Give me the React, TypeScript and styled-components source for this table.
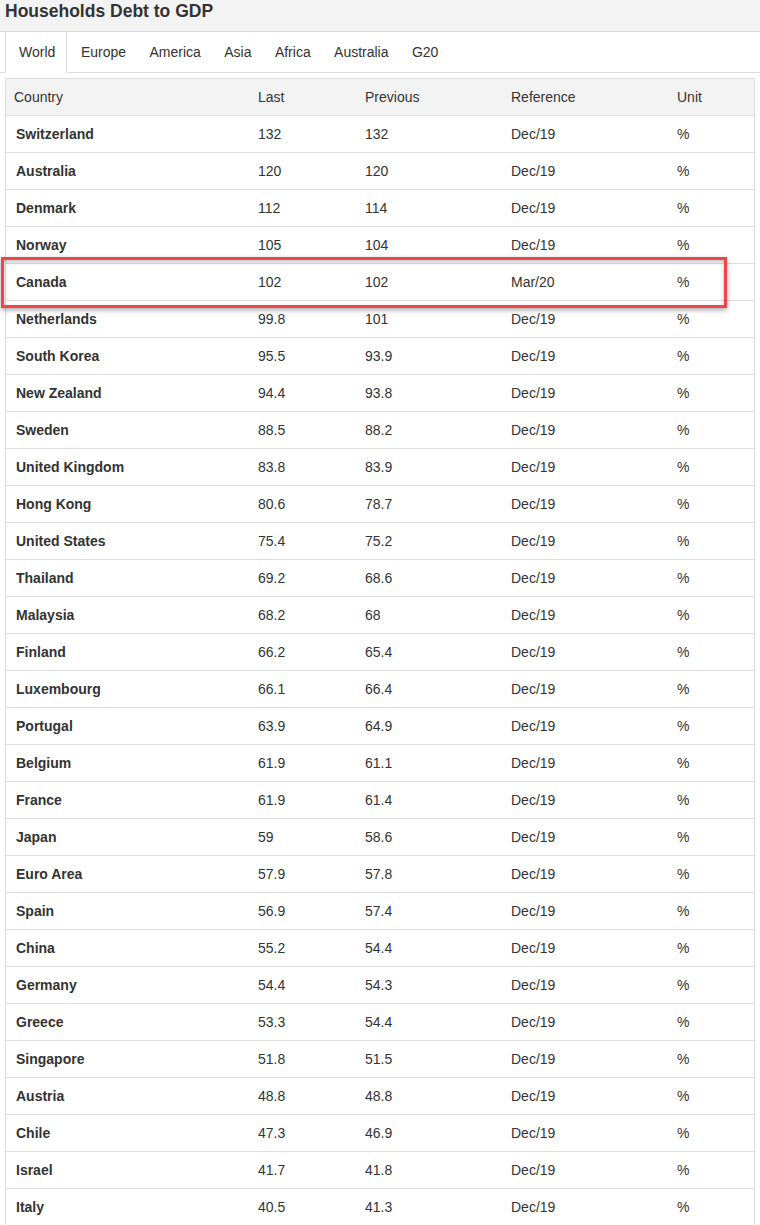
import styled, { createGlobalStyle } from 'styled-components';

const GlobalStyle = createGlobalStyle`
	html, body {
		margin: 0;
		padding: 0;
		background: #fff;
		overflow: hidden;
	}
	body {
		font-family: 'Liberation Sans', Arial, sans-serif;
		color: #333;
	}
`;

const Page = styled.div`
	width: 760px;
`;

const TitleBar = styled.div`
	height: 31px;
	background-color: #f3f3f3;
	border-bottom: 1px solid #d9d9d9;
	padding-left: 5px;
`;

const Title = styled.h1`
	margin: 0;
	font-size: 17.5px;
	line-height: 22px;
	font-weight: bold;
	color: #333;
`;

const TabBar = styled.ul`
	display: flex;
	margin: 0;
	padding: 0 0 0 5px;
	list-style: none;
	border-bottom: 1px solid #ddd;
	height: 40px;
`;

const Tab = styled.li<{ $active?: boolean }>`
	padding: ${(p) => (p.$active ? '0 11px 0 13px' : '0 11.7px')};
	margin-right: ${(p) => (p.$active ? '2px' : '0')};
	font-size: 14px;
	line-height: 40px;
	height: 40px;
	color: #333;
	border: ${(p) => (p.$active ? '1px solid #ddd' : 'none')};
	border-top: none;
	border-bottom: ${(p) => (p.$active ? '1px solid #fff' : 'none')};
	background: ${(p) => (p.$active ? '#fff' : 'transparent')};
	cursor: pointer;
`;

const TableWrap = styled.div`
	position: relative;
	margin: 5px 5px 0 5px;
`;

const Table = styled.table`
	width: 750px;
	border-collapse: collapse;
	border: 1px solid #ddd;
	table-layout: fixed;
	font-size: 14px;
`;

const HeadCell = styled.th<{ $w: number }>`
	width: ${(p) => p.$w - 16}px;
	height: 36px;
	padding: 0 8px;
	text-align: left;
	font-weight: normal;
	background-color: #f3f3f3;
	border-bottom: 1px solid #ddd;
	color: #333;
`;

const Cell = styled.td<{ $bold?: boolean }>`
	height: 36px;
	padding: 0 8px 0 ${(p) => (p.$bold ? '10px' : '8px')};
	border-top: 1px solid #ddd;
	font-weight: ${(p) => (p.$bold ? 'bold' : 'normal')};
	color: #333;
	white-space: nowrap;
`;

const Highlight = styled.div`
	position: absolute;
	left: -4px;
	top: 179px;
	width: 720px;
	height: 45px;
	border: 3px solid #f0434a;
	box-shadow: 0 2px 5px rgba(0, 0, 0, 0.35), inset 0 2px 4px rgba(0, 0, 0, 0.25);
	pointer-events: none;
`;

const tabs = ['World', 'Europe', 'America', 'Asia', 'Africa', 'Australia', 'G20'];

const columns = [
	{ label: 'Country', width: 244 },
	{ label: 'Last', width: 107 },
	{ label: 'Previous', width: 146 },
	{ label: 'Reference', width: 166 },
	{ label: 'Unit', width: 85 },
];

const rows: [string, string, string, string][] = [
	['Switzerland', '132', '132', 'Dec/19'],
	['Australia', '120', '120', 'Dec/19'],
	['Denmark', '112', '114', 'Dec/19'],
	['Norway', '105', '104', 'Dec/19'],
	['Canada', '102', '102', 'Mar/20'],
	['Netherlands', '99.8', '101', 'Dec/19'],
	['South Korea', '95.5', '93.9', 'Dec/19'],
	['New Zealand', '94.4', '93.8', 'Dec/19'],
	['Sweden', '88.5', '88.2', 'Dec/19'],
	['United Kingdom', '83.8', '83.9', 'Dec/19'],
	['Hong Kong', '80.6', '78.7', 'Dec/19'],
	['United States', '75.4', '75.2', 'Dec/19'],
	['Thailand', '69.2', '68.6', 'Dec/19'],
	['Malaysia', '68.2', '68', 'Dec/19'],
	['Finland', '66.2', '65.4', 'Dec/19'],
	['Luxembourg', '66.1', '66.4', 'Dec/19'],
	['Portugal', '63.9', '64.9', 'Dec/19'],
	['Belgium', '61.9', '61.1', 'Dec/19'],
	['France', '61.9', '61.4', 'Dec/19'],
	['Japan', '59', '58.6', 'Dec/19'],
	['Euro Area', '57.9', '57.8', 'Dec/19'],
	['Spain', '56.9', '57.4', 'Dec/19'],
	['China', '55.2', '54.4', 'Dec/19'],
	['Germany', '54.4', '54.3', 'Dec/19'],
	['Greece', '53.3', '54.4', 'Dec/19'],
	['Singapore', '51.8', '51.5', 'Dec/19'],
	['Austria', '48.8', '48.8', 'Dec/19'],
	['Chile', '47.3', '46.9', 'Dec/19'],
	['Israel', '41.7', '41.8', 'Dec/19'],
	['Italy', '40.5', '41.3', 'Dec/19'],
];

export default function App() {
	return (
		<Page>
			<GlobalStyle />
			<TitleBar>
				<Title>Households Debt to GDP</Title>
			</TitleBar>
			<TabBar>
				{tabs.map((t, i) => (
					<Tab key={t} $active={i === 0}>
						{t}
					</Tab>
				))}
			</TabBar>
			<TableWrap>
				<Table>
					<thead>
						<tr>
							{columns.map((c) => (
								<HeadCell key={c.label} $w={c.width}>
									{c.label}
								</HeadCell>
							))}
						</tr>
					</thead>
					<tbody>
						{rows.map(([country, last, prev, ref]) => (
							<tr key={country}>
								<Cell $bold>{country}</Cell>
								<Cell>{last}</Cell>
								<Cell>{prev}</Cell>
								<Cell>{ref}</Cell>
								<Cell>%</Cell>
							</tr>
						))}
					</tbody>
				</Table>
				{/* red annotation box around the Canada row */}
				<Highlight />
			</TableWrap>
		</Page>
	);
}
